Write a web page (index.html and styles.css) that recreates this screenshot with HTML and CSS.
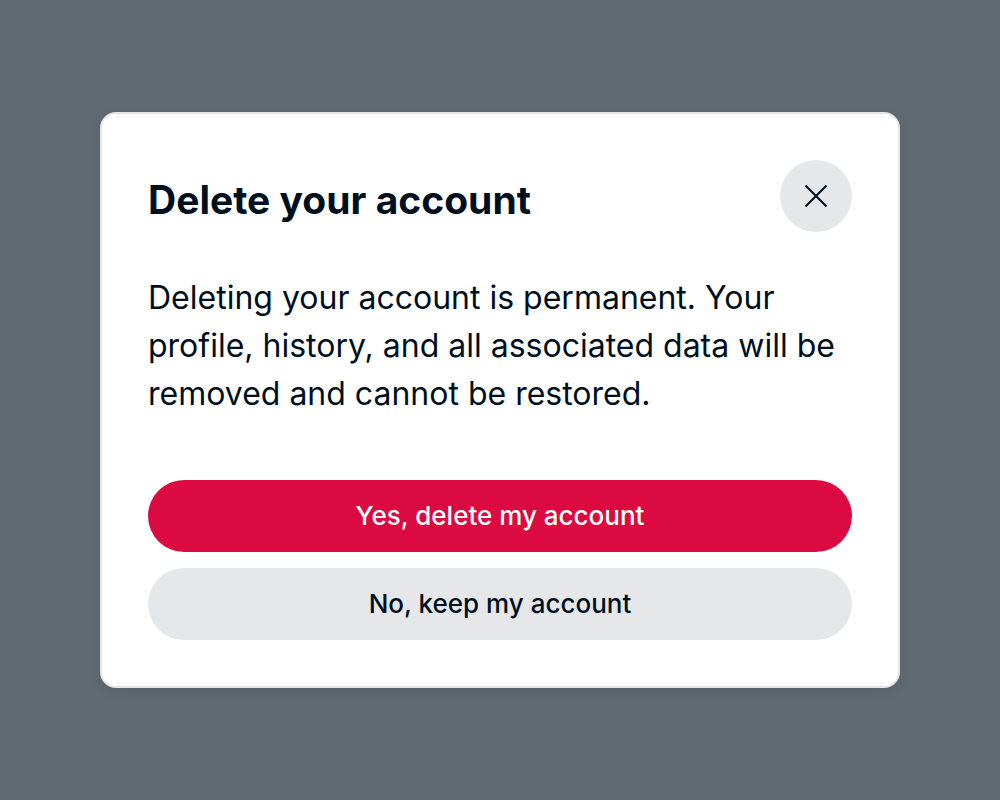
FILE: index.html
```html
<!DOCTYPE html>
<html lang="en">
<head>
<meta charset="utf-8">
<meta name="viewport" content="width=device-width, initial-scale=1">
<title>Delete your account</title>
<link rel="stylesheet" href="styles.css">
</head>
<body class="backdrop">
<section class="dialog" role="dialog" aria-modal="true" aria-labelledby="dialog-title" aria-describedby="dialog-text">
  <header class="dialog-header">
    <h1 class="dialog-title" id="dialog-title">Delete your account</h1>
    <button class="close-button" type="button" aria-label="Close">
      <svg class="close-icon" viewBox="0 0 24 24" aria-hidden="true"><path d="M1.5 1.5L22.5 22.5M22.5 1.5L1.5 22.5"/></svg>
    </button>
  </header>
  <p class="dialog-text" id="dialog-text">Deleting your account is permanent. Your profile, history, and all associated data will be removed and cannot be restored.</p>
  <div class="dialog-actions">
    <button class="button button-danger" type="button">Yes, delete my account</button>
    <button class="button button-neutral" type="button">No, keep my account</button>
  </div>
</section>
</body>
</html>
```

FILE: styles.css
```css
* {
  box-sizing: border-box;
}

.backdrop {
  display: flex;
  align-items: center;
  justify-content: center;
  min-height: 100vh;
  margin: 0;
  padding: 24px;
  background: #606a73;
  color: #000f1e;
  font-family: Inter, "Liberation Sans", sans-serif;
}

.dialog {
  width: 100%;
  max-width: 800px;
  padding: 46px;
  border: 2px solid #e4e6e8;
  border-radius: 16px;
  background: #fff;
  box-shadow: 0 4px 12px rgba(0, 15, 30, 0.08);
}

.dialog-header {
  display: flex;
  align-items: flex-start;
  justify-content: space-between;
  gap: 24px;
}

.dialog-title {
  margin: 0;
  padding-top: 16px;
  font-size: 39px;
  font-weight: 700;
  line-height: 48px;
}

.close-button {
  display: flex;
  flex: none;
  align-items: center;
  justify-content: center;
  width: 72px;
  height: 72px;
  padding: 0;
  border: 0;
  border-radius: 50%;
  background: #e6e7e9;
  color: inherit;
  cursor: pointer;
}

.close-icon {
  width: 24px;
  height: 24px;
  fill: none;
  stroke: currentColor;
  stroke-width: 2;
}

.dialog-text {
  margin: 42px 0 62px;
  font-size: 32px;
  line-height: 48px;
}

.dialog-actions {
  display: grid;
  gap: 16px;
}

.button {
  min-height: 72px;
  padding: 16px 32px;
  border: 0;
  border-radius: 36px;
  font: inherit;
  font-size: 26px;
  font-weight: 500;
  line-height: 40px;
  cursor: pointer;
}

.button-danger {
  background: #db0a40;
  color: #fff;
}

.button-neutral {
  background: #e6e7e9;
  color: inherit;
}
```
